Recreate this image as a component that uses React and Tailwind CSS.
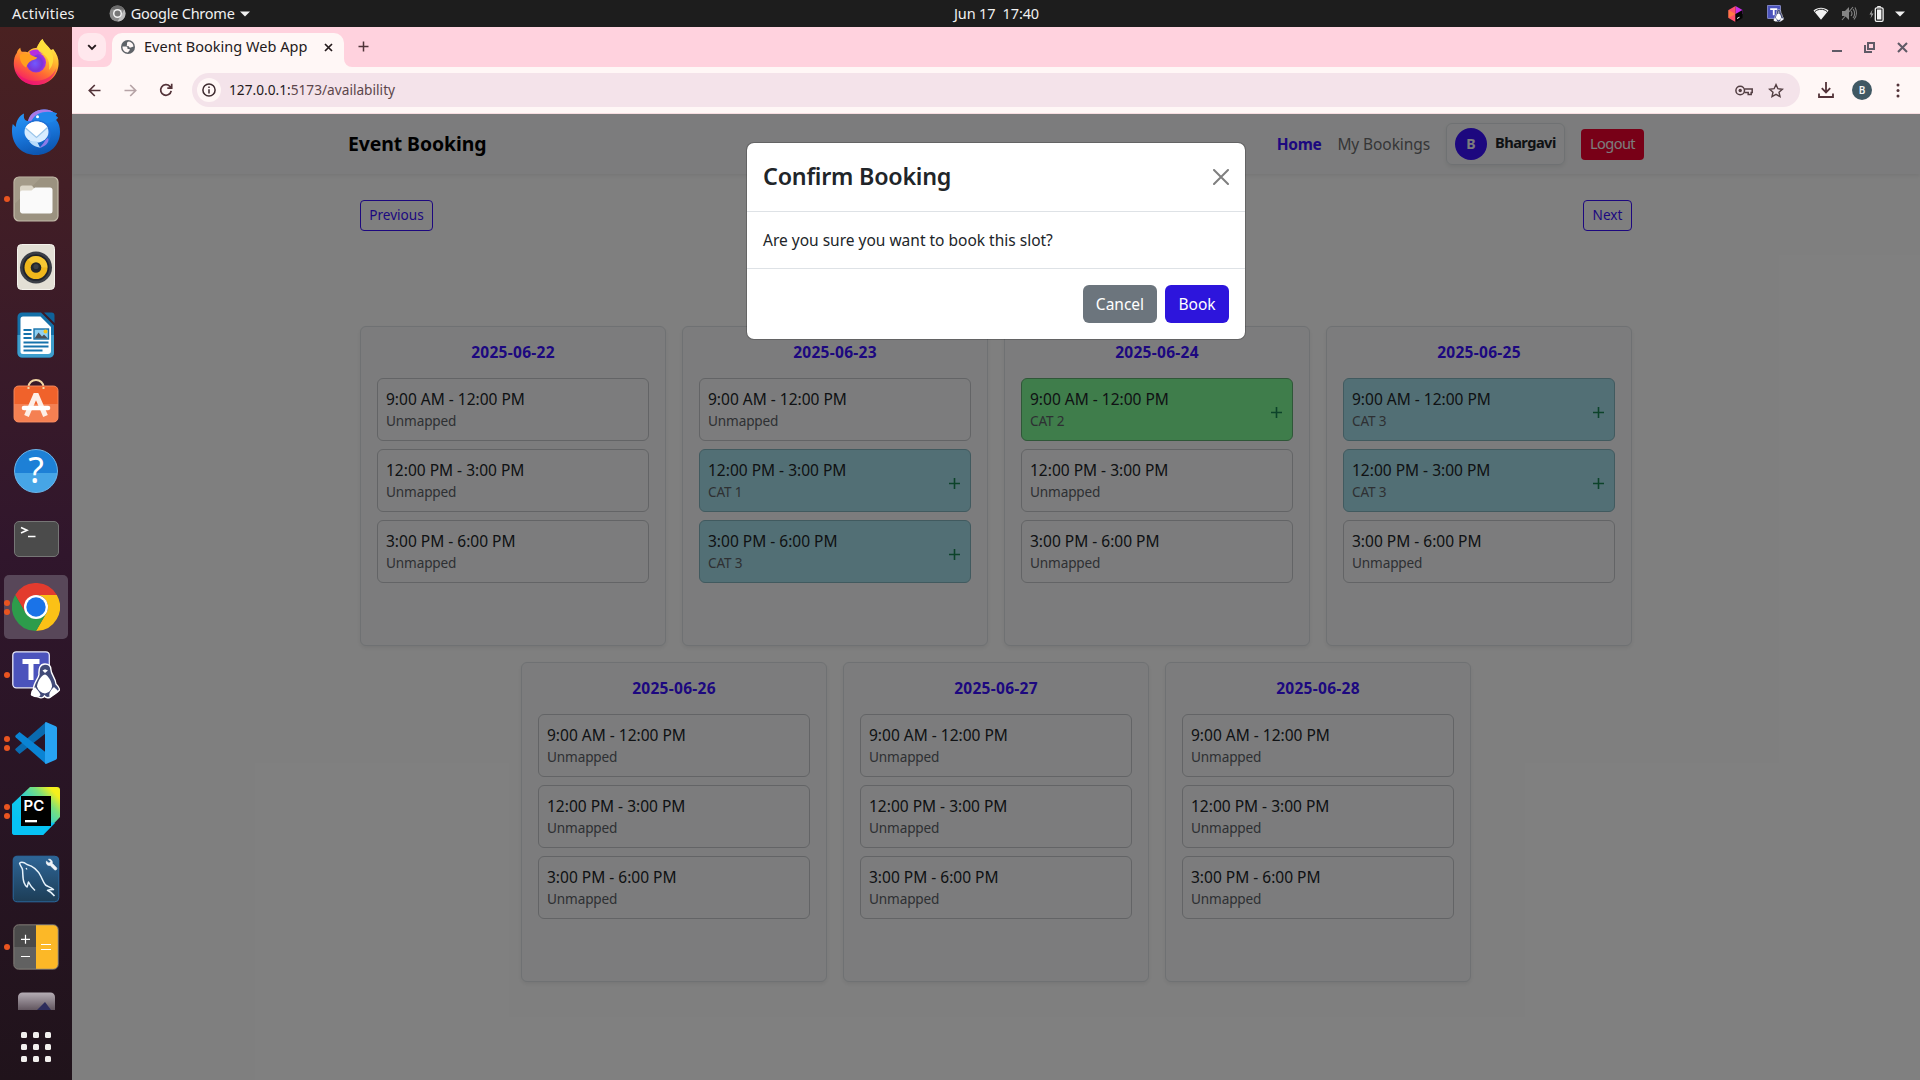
const FREE = "Unmapped";

const days = [
  { date: "2025-06-22", slots: [FREE, FREE, FREE] },
  { date: "2025-06-23", slots: [FREE, "CAT 1", "CAT 3"] },
  { date: "2025-06-24", slots: ["CAT 2", FREE, FREE] },
  { date: "2025-06-25", slots: ["CAT 3", "CAT 3", FREE] },
  { date: "2025-06-26", slots: [FREE, FREE, FREE] },
  { date: "2025-06-27", slots: [FREE, FREE, FREE] },
  { date: "2025-06-28", slots: [FREE, FREE, FREE] },
];

const times = ["9:00 AM - 12:00 PM", "12:00 PM - 3:00 PM", "3:00 PM - 6:00 PM"];

function slotColor(category) {
  if (category === FREE) return "border-[#c6c8cc]";
  if (category === "CAT 2") return "bg-[#7efa96] border-[#5fae70]";
  return "bg-[#a5dfea] border-[#82b4bf]";
}

/* ---------- Dock icons (48px unless noted) ---------- */

const FirefoxIcon = () => (
  <svg width="48" height="48" viewBox="0 0 48 48" className="mb-0.5">
    <defs>
      <linearGradient id="ffBody" x1="0.8" y1="0.05" x2="0.3" y2="1">
        <stop offset="0" stopColor="#fff44f" />
        <stop offset="0.35" stopColor="#ffb52e" />
        <stop offset="0.65" stopColor="#ff6a33" />
        <stop offset="1" stopColor="#f5156c" />
      </linearGradient>
      <radialGradient id="ffCore" cx="0.45" cy="0.55" r="0.6">
        <stop offset="0" stopColor="#7059ff" />
        <stop offset="0.6" stopColor="#7a35d8" />
        <stop offset="1" stopColor="#b833e1" />
      </radialGradient>
    </defs>
    <path d="M30.5 1c1.5 4.500 5.500 6.500 8.500 11l2.200-1C45 16 47 21 46.600 26 46 38 36.500 47 24 47S1.800 37.500 1.800 25.500c0-4.500 1-8 3-10.500.3-2 1.800-4 3.500-5.200.2 2 .7 3 1.500 4 2 0 4-.1 5.700.4C18 11 22.500 9.500 24.500 10 26 7 28 3 30.500 1z" fill="url(#ffBody)" />
    <path d="M3 31c4 8 12 12 20 12 10 0 18-5 21.500-13C42 41 33.500 47 24 47 14 47 5.500 41 3 31z" fill="#e8107a" opacity=".55" />
    <circle cx="24" cy="24.500" r="10" fill="url(#ffCore)" />
    <path d="M17 14c4-3.500 11-3.500 15 2-3-.8-6-.3-8 1-2.500 1.500-5 .5-7-3z" fill="#b52fe0" />
    <path d="M8 16.500c4-1.500 9-1 13 1.500 1.500.8 3 1.200 4.200 1.500-1 2.500-5 2.200-6.200 3.500-2.500 1-3.500 3.500-5 6.500C10 27 7 22 8 16.500z" fill="#ff9f1e" />
    <path d="M30.500 1c1.500 4.500 5.500 6.500 8.500 12 4 7 2 15-2 19 1-7-1-13-6-16-3-2-5-3-5.500-6C26 7 28 3 30.500 1z" fill="#ffe03b" opacity=".9" />
  </svg>
);

const ThunderbirdIcon = () => (
  <svg width="50" height="48" viewBox="0 0 50 48" className="mt-px">
    <defs>
      <linearGradient id="tbBody" x1="0.2" y1="0" x2="0.5" y2="1">
        <stop offset="0" stopColor="#2a9af8" />
        <stop offset="0.5" stopColor="#1a7ae0" />
        <stop offset="1" stopColor="#0c55b0" />
      </linearGradient>
    </defs>
    <path d="M17 13C19 5 26 1 34 1.500c3.500 0 6.500 1 9 3l3 .8-1.500 2.500 2.500 2-2 2C48 15 49 19 49 24c0 13-10 23-24 23C12 47 1.500 38 1 24c0-3 0-5.500.8-8l3 3C5 13 8 8 13 5.500c-.5 4 0 7 4 7.500z" fill="url(#tbBody)" />
    <path d="M17 13C19 5 26 1 34 1.500c3.500 0 6.500 1 9 3-9-2-19 0-22.500 9z" fill="#a779e8" />
    <path d="M20.500 13.500C23 6.500 31 3 43 4.500l3 .8-1.500 2.500 2.500 2-2 2c-4 4-14 4-24.500 1.700z" fill="#1f86ea" />
    <path d="M15 24C14 18 17 13.500 22 12c6-1 12 1 16 6 3 6 2 12-1 17 0-6-3-10-8-13z" fill="#1f6fd6" />
    <path d="M37 30c2 4-3 9-9 10 6-5 5-8 9-10z" fill="#8c7be8" />
    <ellipse cx="25.500" cy="24" rx="12" ry="10.500" fill="#d7ecff" />
    <path d="M18 33c3 4 6 6 11 6.500l-3-6z" fill="#b8dcfb" />
    <path d="M14.500 20l11 9.500L36.500 19.500c-3-8-18.500-8.500-22 .5z" fill="#fff" />
    <path d="M14.500 20l11 9.500L36.500 19.500" fill="none" stroke="#9cc6ea" strokeWidth="1.300" />
    <circle cx="26.500" cy="8.800" r="1.500" fill="#fff" />
  </svg>
);

const FilesIcon = () => (
  <svg width="46" height="46" viewBox="0 0 46 46">
    <rect x="1" y="1" width="44" height="44" rx="5" fill="#9b9280" stroke="#c4bcaa" strokeWidth="1.200" />
    <path d="M1.500 28L28 1.500H6A4.500 4.500 0 0 0 1.500 6z" fill="#aaa18f" opacity=".6" />
    <path d="M7 12a2.500 2.500 0 0 1 2.500-2.500h8.500a2 2 0 0 1 1.700 1l2.300 3V24H7z" fill="#dcd6c8" />
    <path d="M7 16.500a2 2 0 0 1 2-2h9.500l3.500-3H37a2.500 2.500 0 0 1 2.500 2.500v21a2.500 2.500 0 0 1-2.500 2.500H9.500A2.500 2.500 0 0 1 7 34.500z" fill="#fafafa" />
  </svg>
);

const RhythmboxIcon = () => (
  <svg width="38" height="46" viewBox="0 0 38 46">
    <rect x=".5" y=".5" width="37" height="45" rx="4" fill="#e3dfd5" stroke="#f4f2ec" />
    <circle cx="19" cy="23.500" r="16" fill="#3b3e46" />
    <circle cx="19" cy="23.500" r="13.300" fill="#20232b" />
    <circle cx="19" cy="23.500" r="11.500" fill="#efb71c" />
    <path d="M10.900 15.400A11.500 11.500 0 0 1 30.500 23.500L19 23.500z" fill="#fbd444" opacity=".6" />
    <circle cx="19" cy="23.500" r="5.300" fill="#23262b" />
    <circle cx="19" cy="22.500" r="2.600" fill="#3b3f45" />
  </svg>
);

const WriterIcon = () => (
  <svg width="38" height="46" viewBox="0 0 38 46">
    <path d="M5 .500h19L37 13.500V41a4.500 4.500 0 0 1-4.500 4.500H5A4.500 4.500 0 0 1 .5 41V5A4.500 4.500 0 0 1 5 .5z" fill="#1470a8" />
    <path d="M.5 23H37v18a4.500 4.500 0 0 1-4.500 4.500H5A4.500 4.500 0 0 1 .5 41z" fill="#3d9dcc" />
    <path d="M27 .5h7.500a3 3 0 0 1 3 3V11z" fill="#0f629a" />
    <path d="M6 4.500h17.500L34 15v24a3 3 0 0 1-3 3H6a2.500 2.500 0 0 1-2.500-2.500V7A2.500 2.500 0 0 1 6 4.500z" fill="#fff" />
    <path d="M6.500 18h8M6.500 22h8M6.500 26h8M6.500 30.500h25M6.500 34.500h25M6.500 38.500h19" stroke="#1672ab" strokeWidth="2" />
    <rect x="17" y="17" width="14.500" height="10" fill="#8fd0f2" stroke="#1672ab" strokeWidth="1.400" />
    <circle cx="28.500" cy="19.500" r="2" fill="#f6c518" />
    <path d="M17.500 26.500l4-6 3.500 4 2-2 4 4z" fill="#4b5057" />
  </svg>
);

const SoftwareIcon = () => (
  <svg width="46" height="44" viewBox="0 0 46 44" className="mb-1">
    <path d="M15.500 10V8a7.500 7 0 0 1 15 0v2" fill="none" stroke="#f2d6a4" strokeWidth="2" />
    <rect x="1" y="7" width="44" height="36" rx="4.500" fill="#f0622b" />
    <path d="M1 25h44v13.500a4.500 4.500 0 0 1-4.500 4.500h-35A4.500 4.500 0 0 1 1 38.500z" fill="#f58052" />
    <rect x="1" y="7" width="44" height="36" rx="4.500" fill="none" stroke="#f78e64" strokeWidth=".9" />
    <path d="M15.500 10V8M30.500 10V8" stroke="#f2d6a4" strokeWidth="2" />
    <path d="M13.500 37l9.500-22 9.500 22" fill="none" stroke="#fdeee6" strokeWidth="5" strokeLinejoin="bevel" />
    <path d="M11 29h24" stroke="#fff" strokeWidth="4.600" strokeLinecap="round" />
  </svg>
);

const HelpIcon = () => (
  <div className="flex size-11 items-center justify-center rounded-full border border-[#6bb6ec] bg-linear-to-b from-[#1d80d6] from-55% to-[#46a5e6] to-55%">
    <span className="-mt-0.5 text-[36px] leading-none font-normal text-white">?</span>
  </div>
);

const TerminalIcon = () => (
  <div className="h-9 w-[45px] rounded-[5px] border border-[#767676] bg-[#4b4b4b]">
    <svg width="43" height="34" viewBox="0 0 43 34">
      <path d="M6 5.500l6 2.700-6 2.700M13 14.500h7.500" fill="none" stroke="#fff" strokeWidth="1.600" />
    </svg>
  </div>
);

const ChromeIcon = () => (
  <svg width="48" height="48" viewBox="0 0 48 48">
    <path d="M3.200 12A24 24 0 0 1 44.800 12H24L13.600 30z" fill="#e33b2e" />
    <path d="M44.800 12A24 24 0 0 1 24 48l10.400-18A12 12 0 0 0 24 12z" fill="#fbc116" />
    <path d="M3.200 12A24 24 0 0 0 24 48l10.400-18H13.600z" fill="#2d9c4b" />
    <circle cx="24" cy="24" r="12" fill="#fff" />
    <circle cx="24" cy="24" r="9.700" fill="#1a73e8" />
  </svg>
);

const Penguin = () => (
  <>
    <path d="M33 13c4 0 6 2.500 6 6 0 4 4.500 8 5 14 2 2 3.500 5 3.500 6-2 3-6 4-9 7-3 1.500-5 .5-6-1-1 1.500-3.500 2.500-6 1-3-.7-6-1-7-2.500 0-2 .5-4 2-5-.5-6 5-11 5.500-15-.5-6 1-10.500 6-10.500z" fill="#414a78" stroke="#fff" strokeWidth="1.400" />
    <path d="M33 23.500c3 1 7 7 7 12-1 4-3 6-7 7-4-.8-7-3-8-7 .5-5 4-11 8-12z" fill="#fff" />
    <path d="M23 36c2 3 5 5 5.500 8-1.500 3-6 1.500-9 .5-.5-3 1-6 3.500-8.500zM42 36c1.500 1.500 3.500 3 4.500 4.500-2 2-5.500 4-8.500 5.500-1.500-2-.5-6 4-10z" fill="#fff" />
    <path d="M30.500 19.500l2.500-1.300 3 1.300-3 2.500z" fill="#fff" />
  </>
);

const TeamsIcon = () => (
  <svg width="48" height="48" viewBox="0 0 48 48">
    <rect x=".8" y=".8" width="36.500" height="36" rx="3.500" fill="#4b53bc" stroke="#e8e9f8" strokeWidth="1.300" />
    <path d="M10.500 10.500h17M19 9v20" stroke="#fff" strokeWidth="5" />
    <Penguin />
  </svg>
);

const VsCodeIcon = () => (
  <svg width="42" height="42" viewBox="0 0 42 42">
    <path d="M31 0v11L4.500 32 .8 28.600a1.500 1.500 0 0 1 0-2.200z" fill="#0a6bb0" />
    <path d="M31 42V30.500L4.500 10 .8 13.200a1.500 1.500 0 0 0 0 2.200z" fill="#0a84d4" />
    <path d="M31 0l9.800 4.200A2 2 0 0 1 42 6v30a2 2 0 0 1-1.200 1.800L31 42c-.8 0-1-1-1-2V2c0-1 .2-2 1-2z" fill="#27a3f2" />
  </svg>
);

const PyCharmIcon = () => (
  <svg width="48" height="48" viewBox="0 0 48 48">
    <defs>
      <linearGradient id="pcBg" x1="0.15" y1="0.75" x2="0.9" y2="0.05">
        <stop offset="0" stopColor="#07c3f2" />
        <stop offset="0.3" stopColor="#10c8ee" />
        <stop offset="0.72" stopColor="#7be07c" />
        <stop offset="0.95" stopColor="#f5f01c" />
      </linearGradient>
    </defs>
    <path d="M18 0h27a3 3 0 0 1 3 3v27L31 48H3a3 3 0 0 1-3-3V17z" fill="url(#pcBg)" />
    <path d="M0 30v15a3 3 0 0 0 3 3h28l12-12z" fill="#07c3f5" />
    <rect x="9" y="9" width="30" height="30" fill="#000" />
    <text x="11.500" y="24" fontSize="15" fontWeight="600" fontFamily="Inter, sans-serif" fill="#fff">PC</text>
    <rect x="13" y="33" width="12" height="2.300" fill="#fff" />
  </svg>
);

const MySqlIcon = () => (
  <svg width="48" height="48" viewBox="0 0 48 48">
    <defs>
      <linearGradient id="myBg" x1="0" y1="0" x2="0" y2="1">
        <stop offset="0" stopColor="#2e6596" />
        <stop offset="1" stopColor="#1d3d56" />
      </linearGradient>
    </defs>
    <rect x="1.200" y="1.200" width="45.600" height="45.600" rx="4" fill="url(#myBg)" stroke="#2a6aa0" />
    <path d="M7.500 8c2-1.500 5-.5 7.500 1.500 6 1.500 11 6 14 12 1.500 3 2.500 6.500 4.500 8.500 2.500 1.500 5.500 2.500 8 4.500-2.500 0-4.500 0-6 .8 2.500 1.200 5 3.200 7 5.700M7.500 8c.5 3 2.500 4 3 6.500.5 4 0 9 1.500 13 .8 2 1.500 3.500 3 4.500 1-1.500.8-3.500 1.500-5 1.500 3 3.500 6 6.500 8.500" fill="none" stroke="#e6f2fb" strokeWidth="1.500" strokeLinejoin="round" />
    <path d="M14 13l1 1.500" stroke="#fff" strokeWidth="1.200" />
    <path d="M36.500 4.200l2.300 2.300-1.800 1.800-2.600-2.100c-.6 2.600 1 4.800 3.800 4.300l4.300 4.200c1.500 1 3-.6 2-2l-4.200-4.300c.5-2.800-1.500-4.600-3.800-4.200z" fill="#f0f4f8" stroke="#f0f4f8" strokeWidth=".7" />
  </svg>
);

const CalculatorIcon = () => (
  <svg width="46" height="46" viewBox="0 0 46 46">
    <path d="M5.500 1H23v22H1V5.500A4.500 4.500 0 0 1 5.500 1z" fill="#4a4a4a" />
    <path d="M1 23h22v22H5.500A4.500 4.500 0 0 1 1 40.500z" fill="#616161" />
    <path d="M23 1h17.500A4.500 4.500 0 0 1 45 5.500v35a4.500 4.500 0 0 1-4.500 4.500H23z" fill="#fcb827" />
    <rect x=".8" y=".8" width="44.400" height="44.400" rx="4.800" fill="none" stroke="#8c8880" strokeWidth=".9" />
    <path d="M8 15.300h9M12.500 10.800v9M8 32.500h9M28 20.500h10M28 25.500h10" stroke="#fff" strokeWidth="1.200" />
  </svg>
);

const dock = [
  { name: "Firefox", Icon: FirefoxIcon, dots: 0 },
  { name: "Thunderbird", Icon: ThunderbirdIcon, dots: 0 },
  { name: "Files", Icon: FilesIcon, dots: 1 },
  { name: "Rhythmbox", Icon: RhythmboxIcon, dots: 0 },
  { name: "Writer", Icon: WriterIcon, dots: 0 },
  { name: "Software", Icon: SoftwareIcon, dots: 0 },
  { name: "Help", Icon: HelpIcon, dots: 0 },
  { name: "Terminal", Icon: TerminalIcon, dots: 0 },
  { name: "Chrome", Icon: ChromeIcon, dots: 2, active: true },
  { name: "Teams", Icon: TeamsIcon, dots: 1 },
  { name: "Code", Icon: VsCodeIcon, dots: 2 },
  { name: "PyCharm", Icon: PyCharmIcon, dots: 2 },
  { name: "Workbench", Icon: MySqlIcon, dots: 0 },
  { name: "Calculator", Icon: CalculatorIcon, dots: 1 },
];

function Dock() {
  return (
    <aside className="flex w-[72px] shrink-0 flex-col bg-linear-to-b from-[#4a2121] via-[#30162c] via-50% to-[#20131b] pt-0.5">
      {dock.map(({ name, Icon, dots, active }) => (
        <div key={name} className="relative flex h-[68px] shrink-0 items-center justify-center">
          <div className={active ? "flex size-16 items-center justify-center rounded-[5px] bg-[#584759]" : "flex size-16 items-center justify-center"}>
            <Icon />
          </div>
          {dots > 0 && (
            <div className="absolute inset-y-0 left-1 flex flex-col items-center justify-center gap-[3px]">
              {Array.from({ length: dots }, (_, i) => (
                <span key={i} className="size-1.5 rounded-full bg-[#e95420]" />
              ))}
            </div>
          )}
        </div>
      ))}
      <div className="flex h-[29px] shrink-0 items-end justify-center">
        <svg width="37" height="18" viewBox="0 0 37 18" className="block">
          <defs>
            <linearGradient id="fadeApp" x1="0" y1="0" x2="0" y2="1">
              <stop offset="0" stopColor="#b5adb5" />
              <stop offset="1" stopColor="#62565f" />
            </linearGradient>
          </defs>
          <path d="M0 18V5a4.500 4.500 0 0 1 4.500-4.500h28A4.500 4.500 0 0 1 37 5v13z" fill="url(#fadeApp)" />
          <path d="M19 18l8-8 6 8z" fill="#2d2c5c" />
        </svg>
      </div>
      <div className="flex h-[74px] shrink-0 items-center justify-center">
        <div className="grid grid-cols-3 gap-1.5">
          {Array.from({ length: 9 }, (_, i) => (
            <span key={i} className="size-1.5 rounded-[1.500px] bg-[#f2f0ee]" />
          ))}
        </div>
      </div>
    </aside>
  );
}

/* ---------- Desktop top bar ---------- */

function TopBar() {
  return (
    <header className="flex h-[27px] shrink-0 items-center bg-[#1d1d1d] text-[14.5px] text-[#f0f0f0]">
      <div className="flex w-[954px] shrink-0 items-center pl-3">
        <span className="tracking-[0.016em]">Activities</span>
        <svg width="17" height="17" viewBox="0 0 17 17" className="ml-[34px]">
          <circle cx="8.500" cy="8.500" r="8" fill="#8a8a8a" />
          <path d="M1.600 4.500A8 8 0 0 1 15.400 4.500H8.500z" fill="#6b6b6b" />
          <path d="M15.400 4.500A8 8 0 0 1 8.500 16.500l3.500-6z" fill="#bdbdbd" />
          <circle cx="8.500" cy="8.500" r="4.500" fill="#f4f4f4" />
          <circle cx="8.500" cy="8.500" r="3" fill="#777" />
        </svg>
        <span className="ml-[5px] tracking-[-0.017em]">Google Chrome</span>
        <svg width="10" height="6" viewBox="0 0 10 6" className="ml-[5px]">
          <path d="M0 .5h10L5 5.500z" fill="#f0f0f0" />
        </svg>
      </div>
      <span className="tracking-[-0.01em] whitespace-pre">Jun 17  17:40</span>
      <div className="flex flex-1 items-center justify-end pr-[15px]">
        <svg width="15" height="16" viewBox="0 0 15 16">
          <path d="M7.500 0L14.500 4v4L7.500 8z" fill="#c82ee8" />
          <path d="M7.500 0v8L7.500 16 .5 12V4z" fill="#ff4f6a" />
          <path d="M.5 4l7 4-7 4z" fill="#ff7a45" />
          <path d="M7.500 8l7-4v8l-7 4z" fill="#050505" />
          <path d="M9 12.500l2.500-1.300" stroke="#fff" />
        </svg>
        <svg width="17" height="17" viewBox="0 0 48 48" className="ml-6">
          <rect x="1" y="1" width="37" height="37" rx="2" fill="#4b53bc" stroke="#a9adea" strokeWidth="2" />
          <path d="M9 11.500h20M19 9v20" stroke="#fff" strokeWidth="5" />
          <Penguin />
        </svg>
        <svg width="16" height="13" viewBox="0 0 16 13" className="ml-[29px]">
          <path d="M.5 3.500C5-.2 11-.2 15.500 3.500L8 12.700z" fill="#f2f2f2" />
          <path d="M2 4.500c3.500-3 8.500-3 12 0" fill="none" stroke="#1d1d1d" strokeWidth="1" />
        </svg>
        <svg width="16" height="15" viewBox="0 0 16 15" className="ml-3">
          <path d="M1 5h3l4-4v13L4 10H1z" fill="#858585" />
          <path d="M10 5c1.200 1.500 1.200 3.500 0 5M12 3c2.200 2.500 2.200 6.500 0 9M14 1.500c2 3.500 2 8.500-1 12M1 14L12 1" fill="none" stroke="#858585" strokeWidth="1.100" />
        </svg>
        <svg width="15" height="16" viewBox="0 0 15 16" className="ml-3">
          <path d="M3.500 3.500L.5 8.500h2L1.500 12.500l3-5h-2z" fill="#a8a8a8" />
          <path d="M8.500 1.500V.5h3v1" stroke="#f2f2f2" fill="none" />
          <rect x="6.300" y="1.800" width="7.800" height="13.500" rx="1.300" fill="none" stroke="#f2f2f2" strokeWidth="1.300" />
          <rect x="8" y="3.500" width="4.400" height="10" fill="#f2f2f2" />
        </svg>
        <svg width="10" height="6" viewBox="0 0 10 6" className="ml-[11px]">
          <path d="M0 .5h10L5 5.500z" fill="#f0f0f0" />
        </svg>
      </div>
    </header>
  );
}

/* ---------- Browser chrome ---------- */

function TabStrip() {
  return (
    <div className="flex h-10 items-start bg-[#ffd2de] pl-1.5 text-[#241a1c]">
      <button className="mt-1.5 flex size-7 items-center justify-center rounded-[10px] bg-[#ffe8ed]">
        <svg width="10" height="7" viewBox="0 0 10 7"><path d="M1.200 1.200L5 5l3.800-3.800" fill="none" stroke="#241a1c" strokeWidth="1.900" /></svg>
      </button>
      <div className="relative mt-1.5 ml-1.5 flex h-[34px] w-[232px] items-center rounded-t-[10px] bg-[#fff7f6] pb-1.5 pl-[9px]">
        <svg width="8" height="8" viewBox="0 0 8 8" className="absolute bottom-0 -left-2"><path d="M8 0v8H0a8 8 0 0 0 8-8z" fill="#fff7f6" /></svg>
        <svg width="8" height="8" viewBox="0 0 8 8" className="absolute -right-2 bottom-0"><path d="M0 0v8h8a8 8 0 0 1-8-8z" fill="#fff7f6" /></svg>
        <svg width="14" height="14" viewBox="0 0 14 14">
          <circle cx="7" cy="7" r="7" fill="#5f6368" />
          <path d="M1.500 6.500h3.300c1 0 1.700.6 1.700 1.500v1h1.800c.6 0 .7 1 .2 1.500L6.800 12.500C3.500 12.300 1.300 9.800 1.500 6.500zM6 3.500c0-1 .8-1.800 2-1.900 2.600.5 4.300 2.500 4.500 5l-2.700 1c-1.200.3-1.800-.3-1.800-1.400H6.800C5.700 6.200 5.500 5.300 6 4.700z" fill="#fff7f6" />
        </svg>
        <span className="ml-[9px] w-[172px] text-[14.5px] tracking-[0.002em]">Event Booking Web App</span>
        <svg width="9" height="9" viewBox="0 0 9 9" className="ml-2"><path d="M1 1l7 7M8 1L1 8" stroke="#241a1c" strokeWidth="1.700" /></svg>
      </div>
      <svg width="11" height="11" viewBox="0 0 11 11" className="mt-[14px] ml-[14px]"><path d="M5.500 .5v10M.5 5.500h10" stroke="#4f3439" strokeWidth="1.500" /></svg>
      <div className="mt-[14px] mr-3 ml-auto flex items-center gap-[22px]">
        <svg width="10" height="12" viewBox="0 0 10 12"><path d="M0 10h10" stroke="#5f5a66" strokeWidth="2" /></svg>
        <svg width="11" height="11" viewBox="0 0 11 11"><path d="M4 1h6v6H4zM1 3v7h7" fill="none" stroke="#5f5a66" strokeWidth="2" /></svg>
        <svg width="11" height="11" viewBox="0 0 11 11"><path d="M1 1l9 9M10 1l-9 9" stroke="#5f5a66" strokeWidth="2.100" /></svg>
      </div>
    </div>
  );
}

function Toolbar() {
  return (
    <div className="flex h-[47px] items-center border-b border-[#f7dde0] bg-[#fff7f6] pl-4">
      <svg width="13" height="13" viewBox="0 0 13 13"><path d="M12.500 6.500H1.500M6.800 1L1.300 6.500 6.800 12" fill="none" stroke="#533339" strokeWidth="1.700" /></svg>
      <svg width="13" height="13" viewBox="0 0 13 13" className="ml-[22.5px]"><path d="M.5 6.500h11M6.200 1l5.500 5.500L6.200 12" fill="none" stroke="#b6a3a6" strokeWidth="1.700" /></svg>
      <svg width="14" height="14" viewBox="0 0 14 14" className="ml-[22.5px]"><path d="M12.200 7.800A5.300 5.300 0 1 1 10.900 3.400L12.500 5M12.700 .8V5.200H8.300" fill="none" stroke="#533339" strokeWidth="1.700" /></svg>
      <div className="ml-[19px] flex h-[34px] w-[1608px] items-center rounded-full bg-[#f4e3ea] pl-[5px]">
        <span className="flex size-6 items-center justify-center rounded-full bg-[#fff7f6]">
          <svg width="14" height="14" viewBox="0 0 14 14"><circle cx="7" cy="7" r="6.100" fill="none" stroke="#3d2a2e" strokeWidth="1.500" /><path d="M7 6.200v4.300M7 3.500v1.600" stroke="#3d2a2e" strokeWidth="1.500" /></svg>
        </span>
        <span className="ml-2 text-[13.7px] text-[#5c464b]"><span className="text-[#241a1c]">127.0.0.1:</span>5173/availability</span>
        <svg width="18" height="11" viewBox="0 0 18 11" className="mr-[15px] ml-auto">
          <circle cx="5.200" cy="5.500" r="4.300" fill="none" stroke="#533f43" strokeWidth="1.500" />
          <circle cx="5.200" cy="5.500" r="1.700" fill="#533f43" />
          <path d="M9.500 4h7.700v3.500h-1v2h-3v-2H9.500" fill="none" stroke="#533f43" strokeWidth="1.500" />
        </svg>
        <svg width="16" height="15" viewBox="0 0 16 15" className="mr-4"><path d="M8 1.600l1.900 4.100 4.500.5-3.400 3 1 4.400L8 11.300l-4 2.300 1-4.400-3.400-3 4.500-.5z" fill="none" stroke="#533f43" strokeWidth="1.400" /></svg>
      </div>
      <svg width="16" height="16" viewBox="0 0 16 16" className="ml-[18px]"><path d="M8 0v10M3.800 6.200L8 10.400l4.200-4.200M1 11.500V15h14v-3.500" fill="none" stroke="#533339" strokeWidth="1.800" /></svg>
      <span className="ml-[18px] flex size-5 items-center justify-center rounded-full bg-[#405863] text-[10px] font-semibold text-[#f4f4f4]">B</span>
      <svg width="4" height="15" viewBox="0 0 4 15" className="ml-6"><circle cx="2" cy="2" r="1.500" fill="#533339" /><circle cx="2" cy="7.500" r="1.500" fill="#533339" /><circle cx="2" cy="13" r="1.500" fill="#533339" /></svg>
    </div>
  );
}

/* ---------- Web page ---------- */

function Navbar() {
  return (
    <nav className="flex h-[60px] items-center justify-between bg-[#f8f9fa] px-[276px] shadow-[0_2px_4px_rgba(0,0,0,0.075)]">
      <span className="text-[19.4px] font-bold tracking-[-0.004em] text-black">Event Booking</span>
      <div className="flex items-center">
        <span className="pt-px text-[15.5px] font-bold tracking-[-0.02em] text-[#3a10ff]">Home</span>
        <span className="ml-4 pt-px text-[15.5px] tracking-[-0.006em] text-[#6c6d6e]">My Bookings</span>
        <div className="ml-4 flex h-[42px] w-[119px] items-center rounded-md border border-[#dee2e6] pl-2 shadow-[0_2px_4px_rgba(0,0,0,0.075)]">
          <span className="flex size-8 items-center justify-center rounded-full bg-[#3a10ff] pb-px text-[14px] font-bold text-[#f8f9fa]">B</span>
          <span className="ml-2 pb-0.5 text-[14.6px] font-bold tracking-[-0.036em] text-[#212529]">Bhargavi</span>
        </div>
        <span className="ml-4 flex h-[31px] w-[63px] items-center justify-center rounded bg-[#f0002e] pb-px text-[14.6px] tracking-[-0.04em] text-[#f8f9fa]">Logout</span>
      </div>
    </nav>
  );
}

function Slot({ time, category }) {
  return (
    <div className={`flex h-[63px] items-center justify-between rounded-md border px-2 ${slotColor(category)}`}>
      <div>
        <div className="text-[15.5px] leading-6 text-[#212529]">{time}</div>
        <div className="pb-0.5 text-[13.6px] leading-[19px] tracking-[-0.01em] text-[#5c6167]">{category}</div>
      </div>
      {category !== FREE && (
        <svg width="11" height="11" viewBox="0 0 11 11" className="mt-[5px] mr-[2.5px]"><path d="M5.500 0v11M0 5.500h11" stroke="#198754" strokeWidth="1.600" /></svg>
      )}
    </div>
  );
}

function DayCard({ day }) {
  return (
    <section className="h-80 w-[306px] rounded-md border border-[#dee2e6] bg-[#f8f9fa] p-4 shadow-[0_2px_4px_rgba(0,0,0,0.075)]">
      <h5 className="mb-4 text-center text-[15.5px] leading-[19px] font-bold tracking-[0.018em] text-[#3a10ff]">{day.date}</h5>
      <div className="flex flex-col gap-2">
        {times.map((time, i) => (
          <Slot key={time} time={time} category={day.slots[i]} />
        ))}
      </div>
    </section>
  );
}

function ConfirmModal() {
  return (
    <div className="absolute inset-0 flex items-start justify-center bg-black/50 pt-7">
      <div className="w-[500px] rounded-lg border border-black/20 bg-white bg-clip-padding text-[#212529]">
        <div className="flex h-[69px] items-center justify-between border-b border-[#dee2e6] px-4">
          <h2 className="pb-0.5 text-[23.3px] font-[560] tracking-[-0.01em]">Confirm Booking</h2>
          <svg width="16" height="16" viewBox="0 0 16 16"><path d="M1 1l14 14M15 1L1 15" stroke="#7f7f7f" strokeWidth="2" strokeLinecap="round" /></svg>
        </div>
        <p className="border-b border-[#dee2e6] p-4 text-[15.5px] leading-6">Are you sure you want to book this slot?</p>
        <div className="flex justify-end gap-2 p-4 text-[15.5px] text-white">
          <button className="h-[38px] w-[74px] rounded-md bg-[#6c757d] pt-px">Cancel</button>
          <button className="h-[38px] w-16 rounded-md bg-[#2d15dc] pt-px">Book</button>
        </div>
      </div>
    </div>
  );
}

function BookingPage() {
  return (
    <main className="relative flex-1 overflow-hidden bg-white">
      <Navbar />
      <div className="flex items-start justify-between px-72 pt-[26px] text-[13.6px] text-[#3a10ff]">
        <button className="h-[31px] w-[73px] rounded border border-[#3a10ff]">Previous</button>
        <button className="h-[31px] w-[49px] rounded border border-[#3a10ff]">Next</button>
      </div>
      <div className="mt-[95px] flex flex-wrap justify-center gap-4 px-72">
        {days.map((day) => (
          <DayCard key={day.date} day={day} />
        ))}
      </div>
      <ConfirmModal />
    </main>
  );
}

export default function App() {
  return (
    <div className="flex h-screen w-screen flex-col overflow-hidden font-['Noto_Sans',sans-serif]">
      <TopBar />
      <div className="flex min-h-0 flex-1">
        <Dock />
        <div className="flex min-w-0 flex-1 flex-col">
          <TabStrip />
          <Toolbar />
          <BookingPage />
        </div>
      </div>
    </div>
  );
}
